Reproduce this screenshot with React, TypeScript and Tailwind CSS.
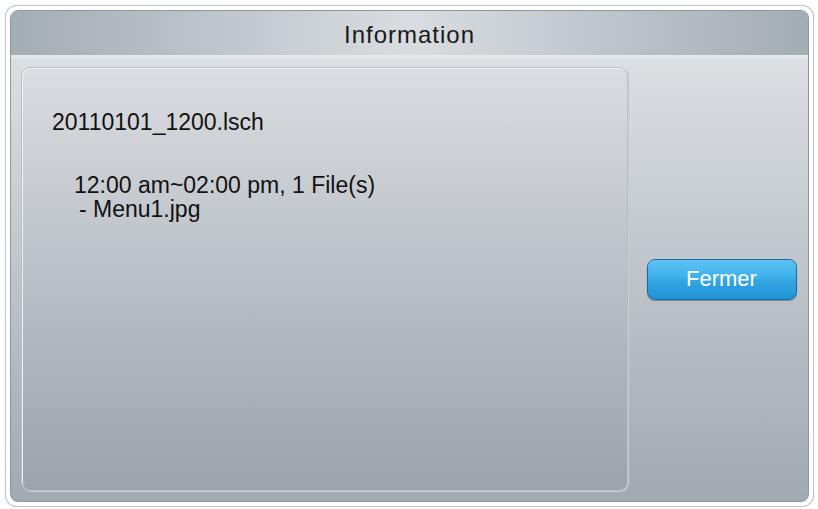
import React from "react";

export default function App() {
  return (
    <div className="w-[818px] h-[509px] bg-white pl-[5px] pt-[5px]" style={{ fontFamily: '"Liberation Sans", Arial, sans-serif' }}>
      <div className="w-[809px] h-[502px] rounded-[12px] border border-[#c4c8cc] bg-white p-[4px] shadow-[0_0_1px_#b0b4b8]">
        <div className="w-full h-full rounded-[8px] border border-[#8f979e] overflow-hidden flex flex-col bg-gradient-to-b from-[#e2e5e8] to-[#a1a9b1]">
          <div className="h-[47px] shrink-0 flex items-center justify-center bg-gradient-to-r from-[#a3adb4] via-[#d9dde1] to-[#a3adb4] border-b-[3px] border-[#e6e9ec]">
            <span className="text-[24px] tracking-[1px] text-[#1a1a1a] leading-none mt-[3px]">Information</span>
          </div>
          <div className="flex-1 flex pl-[10px] pt-[9px] pb-[10px]">
            <div className="w-[607px] h-full rounded-[9px] border border-[#b9bfc5] bg-gradient-to-b from-[#dadde1] to-[#9ba3ab] shadow-[inset_1px_1px_0_#eef0f2,1px_1px_0_#c9cdd2] pl-[30px] pt-[42px] text-[23px] text-[#111] leading-[24px]">
              <div>20110101_1200.lsch</div>
              <div className="mt-[39px] pl-[22px]">12:00 am~02:00 pm, 1 File(s)</div>
              <div className="pl-[27px]">- Menu1.jpg</div>
            </div>
            <div className="flex-1 flex items-center justify-center pl-[7px]">
              <div className="relative w-[150px] h-[41px] rounded-[8px] border border-[#1b6aa3] bg-gradient-to-b from-[#4ab8ef] to-[#1e93d6] shadow-[inset_0_1px_0_#8fd6fa,0_1px_1px_#7d8891] overflow-hidden flex items-center justify-center">
                <div className="absolute left-0 right-0 top-0 h-[50%] bg-gradient-to-b from-[#5cc3f4] to-[#3aaeea]" />
                <span className="relative text-[22px] text-white leading-none">Fermer</span>
              </div>
            </div>
          </div>
        </div>
      </div>
    </div>
  );
}
